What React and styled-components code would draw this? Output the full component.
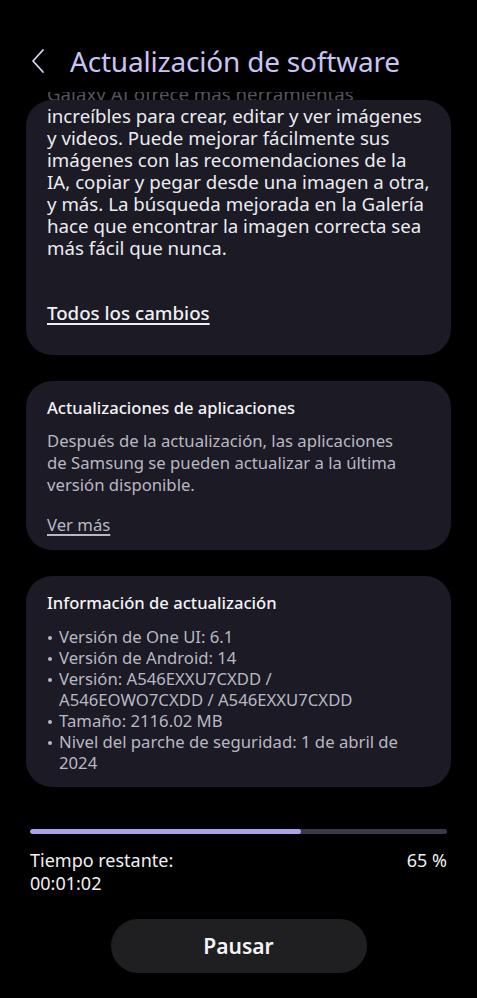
import React from 'react';
import styled, { createGlobalStyle } from 'styled-components';

const Global = createGlobalStyle`
	html, body {
		margin: 0;
		padding: 0;
		background: #000;
	}
	body {
		font-family: 'Noto Sans', 'Open Sans', sans-serif;
		color: #ececf0;
	}
`;

const Screen = styled.div`
	width: 477px;
	height: 998px;
	background: #000;
	display: flex;
	flex-direction: column;
	overflow: hidden;
`;

const Header = styled.div`
	height: 92px;
	display: flex;
	align-items: center;
	padding: 30px 0 0 30px;
	gap: 24px;
	box-sizing: border-box;
`;

const Title = styled.h1`
	margin: 0;
	font-size: 28px;
	font-weight: 400;
	color: #c8c3f2;
	letter-spacing: -0.2px;
`;

const Scroll = styled.div`
	flex: 1;
	overflow: hidden;
	display: flex;
	flex-direction: column;
	gap: 26px;
	padding: 8px 26px 0 26px;
`;

const Card = styled.div`
	background: #1b1a25;
	border-radius: 26px;
	padding: ${(p) => p.$pad || '16px 21px 14px'};
	display: flex;
	flex-direction: column;
`;

const Clipped = styled.div`
	margin-top: -8px;
`;

const Ghost = styled.div`
	height: 8px;
	overflow: hidden;
	font-size: 18.7px;
	line-height: 4px;
	color: #55545f;
	white-space: nowrap;
`;

const Body = styled.p`
	margin: ${(p) => p.$margin || '0'};
	font-size: ${(p) => p.$size || '18.7px'};
	line-height: 22px;
	color: ${(p) => p.$color || '#ececf0'};
`;

const Line = styled.span`
	display: block;
	white-space: nowrap;
`;

const CardTitle = styled.h3`
	margin: 0 0 ${(p) => p.$gap || '11px'};
	font-size: 16.6px;
	font-weight: 500;
	line-height: 22px;
	color: #f4f4f6;
`;

const Link = styled.a`
	font-size: ${(p) => p.$size || '18.7px'};
	font-weight: ${(p) => p.$weight || 500};
	color: ${(p) => p.$color || '#f0f0f2'};
	text-decoration: underline;
	text-underline-offset: 3px;
	text-decoration-thickness: 1.5px;
	margin-top: ${(p) => p.$top || '0'};
	align-self: flex-start;
	line-height: 22px;
`;

const List = styled.ul`
	margin: 0;
	padding: 0;
	list-style: none;
`;

const Item = styled.li`
	position: relative;
	padding-left: 12px;
	font-size: 16.7px;
	line-height: 21px;
	color: #b9b8c2;
	&::before {
		content: '';
		position: absolute;
		left: 1px;
		top: 10px;
		width: 4px;
		height: 4px;
		border-radius: 50%;
		background: #b9b8c2;
	}
`;

const Footer = styled.div`
	padding: 0 30px 25px;
	display: flex;
	flex-direction: column;
`;

const Track = styled.div`
	height: 5px;
	border-radius: 3px;
	background: #3a3849;
	overflow: hidden;
`;

const Fill = styled.div`
	height: 100%;
	background: #a9a4e8;
	border-radius: 3px;
`;

const Status = styled.div`
	display: flex;
	justify-content: space-between;
	margin-top: 15px;
	font-size: 18px;
	line-height: 23px;
	color: #f0f0f2;
`;

const PauseButton = styled.button`
	align-self: center;
	margin-top: 24px;
	width: 256px;
	height: 54px;
	border: none;
	border-radius: 27px;
	background: #1f1f21;
	color: #f4f4f6;
	font-family: 'Noto Sans', sans-serif;
	font-size: 21px;
	font-weight: 600;
`;

const Back = () => (
	<svg width="16" height="26" viewBox="0 0 16 26">
		<path d="M13 2 L3 13 L13 24" fill="none" stroke="#d8d6ee" strokeWidth="1.8" strokeLinecap="round" strokeLinejoin="round" />
	</svg>
);

const Lines = ({ lines }) => lines.map((_line) => <Line key={_line}>{_line}</Line>);

const features = [
	'increíbles para crear, editar y ver imágenes',
	'y videos. Puede mejorar fácilmente sus',
	'imágenes con las recomendaciones de la',
	'IA, copiar y pegar desde una imagen a otra,',
	'y más. La búsqueda mejorada en la Galería',
	'hace que encontrar la imagen correcta sea',
	'más fácil que nunca.'
];

const appUpdates = [
	'Después de la actualización, las aplicaciones',
	'de Samsung se pueden actualizar a la última',
	'versión disponible.'
];

const info = [
	['Versión de One UI: 6.1'],
	['Versión de Android: 14'],
	['Versión: A546EXXU7CXDD /', 'A546EOWO7CXDD / A546EXXU7CXDD'],
	['Tamaño: 2116.02 MB'],
	['Nivel del parche de seguridad: 1 de abril de', '2024']
];

export default function App() {
	const progress = 65;
	return (
		<Screen>
			<Global />
			<Header>
				<Back />
				<Title>Actualización de software</Title>
			</Header>
			<Scroll>
				<Card $pad="0 21px 31px">
					<Clipped>
						<Ghost>Galaxy AI ofrece más herramientas</Ghost>
						<Body $margin="5px 0 0">
							<Lines lines={features} />
						</Body>
					</Clipped>
					<Link $top="43px">Todos los cambios</Link>
				</Card>
				<Card>
					<CardTitle>Actualizaciones de aplicaciones</CardTitle>
					<Body $size="16.7px" $color="#b9b8c2">
						<Lines lines={appUpdates} />
					</Body>
					<Link $size="16.7px" $weight={400} $color="#b9b8c2" $top="18px">
						Ver más
					</Link>
				</Card>
				<Card>
					<CardTitle $gap="12px">Información de actualización</CardTitle>
					<List>
						{info.map((_item) => (
							<Item key={_item[0]}>
								<Lines lines={_item} />
							</Item>
						))}
					</List>
				</Card>
			</Scroll>
			<Footer>
				<Track>
					<Fill style={{ width: `${progress}%` }} />
				</Track>
				<Status>
					<span>
						Tiempo restante:
						<br />
						00:01:02
					</span>
					<span>{progress} %</span>
				</Status>
				<PauseButton>Pausar</PauseButton>
			</Footer>
		</Screen>
	);
}
